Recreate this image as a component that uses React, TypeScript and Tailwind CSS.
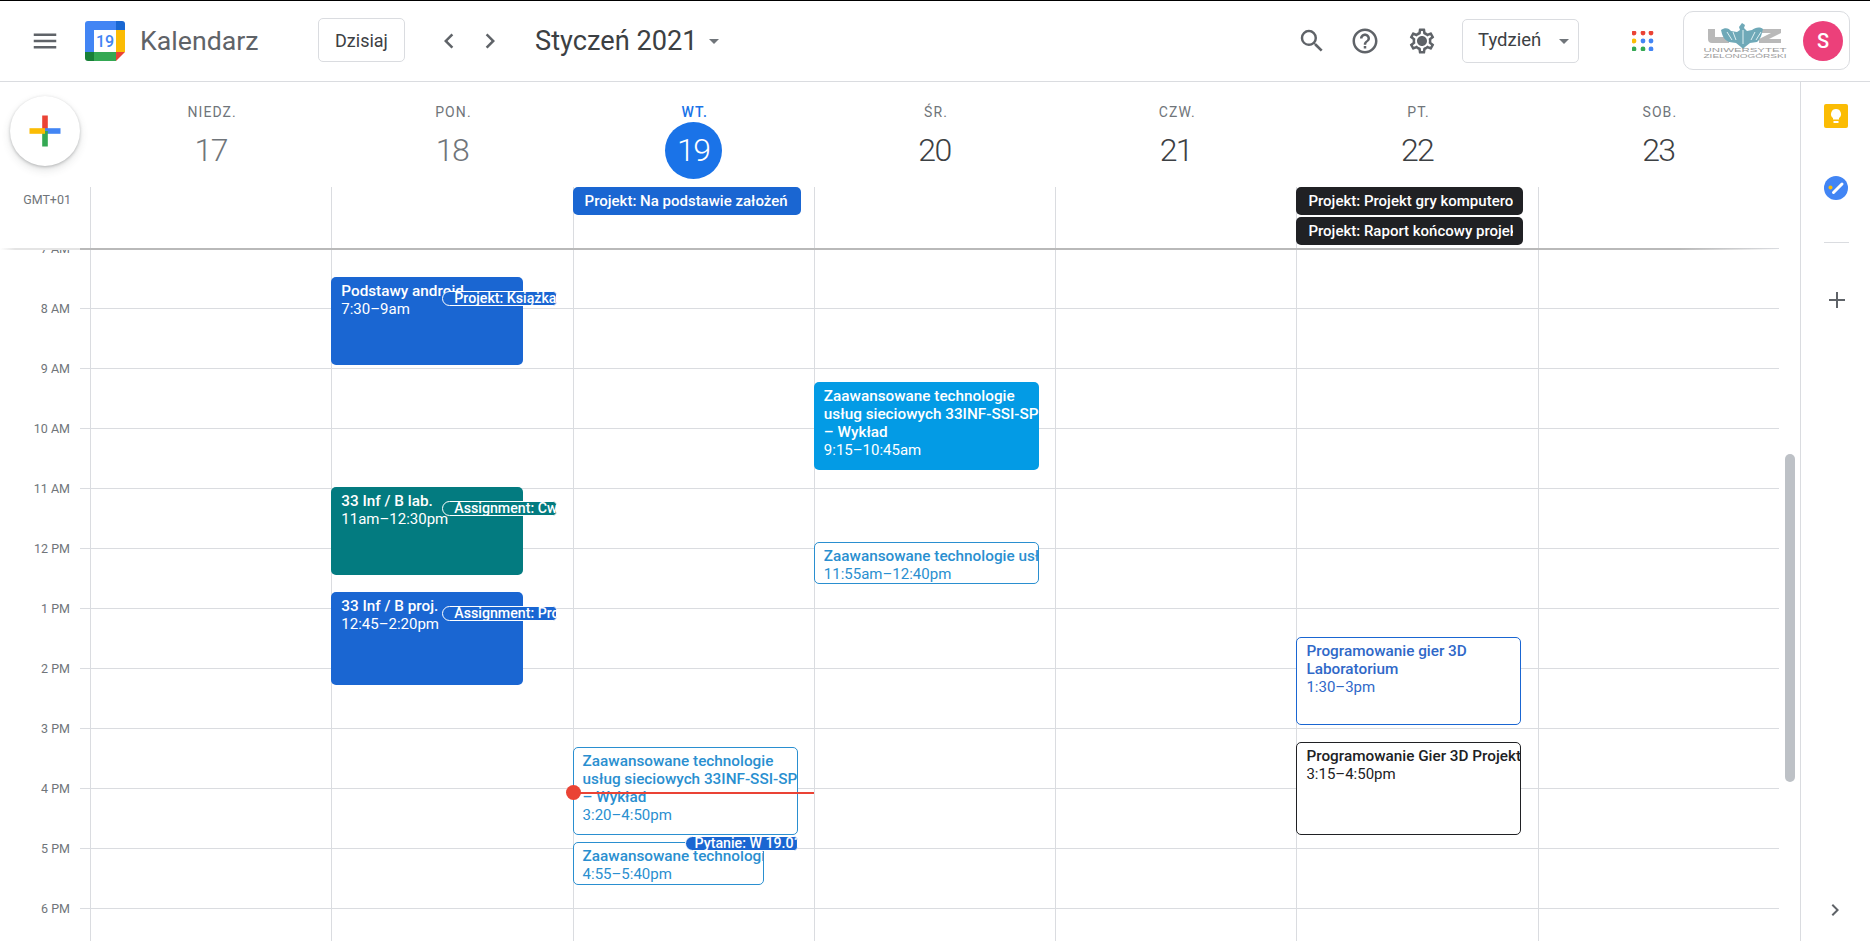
import React from "react";

const Ic = ({ d, className = "" }: { d: string; className?: string }) => (
  <svg viewBox="0 0 24 24" className={"w-[30px] h-[30px] shrink-0 fill-[#5f6368] " + className}>
    <path d={d} />
  </svg>
);

const Caret = ({ className = "" }: { className?: string }) => (
  <svg viewBox="0 0 10 5" className={"w-[10px] h-[5px] shrink-0 fill-[#70757a] " + className}>
    <path d="M0 0h10L5 5z" />
  </svg>
);

const Logo = () => (
  <svg viewBox="0 0 40 40" className="w-[40px] h-[40px] shrink-0 ml-[25px]">
    <path d="M3 0h6v9H0V3a3 3 0 0 1 3-3z" fill="#4285f4" />
    <rect x="9" y="0" width="22" height="9" fill="#4285f4" />
    <path d="M31 0h6a3 3 0 0 1 3 3v6h-9z" fill="#1967d2" />
    <rect x="0" y="9" width="9" height="22" fill="#4285f4" />
    <rect x="31" y="9" width="9" height="22" fill="#fbbc04" />
    <rect x="9" y="31" width="22" height="9" fill="#34a853" />
    <path d="M0 31h9v9H3a3 3 0 0 1-3-3z" fill="#188038" />
    <path d="M31 31h9l-9 9z" fill="#ea4335" />
    <rect x="9" y="9" width="22" height="22" fill="#fff" />
    <text x="20" y="26" textAnchor="middle" fontSize="16" fontWeight="500" fill="#4285f4" fontFamily="Roboto, sans-serif">19</text>
  </svg>
);

const UzLogo = () => (
  <svg viewBox="0 0 84 36" className="w-[84px] h-[36px] shrink-0 ml-[19px]">
    <path d="M5 6h7v8h14v6H9a4 4 0 0 1-4-4z" fill="#b9b9b9" />
    <path d="M56 6h22v4l-12 6h12v4H56v-4l12-6H56z" fill="#b9b9b9" />
    <path d="M18 7c4-3 8-2 10 1l6 1 3-2-1-3 3-4 3 2-1 3 3 3 5-1c3-2 7-4 11-1-1 4-2 10-6 13l-7 1-5 4-2 2-2-2-5-4-7-1C21 17 19 12 18 7z" fill="#6fa9b8" />
    <path d="M24 9l5 8M30 9l3 8M52 9l-4 8M58 9l-5 8M40 7v14" stroke="#dff0f3" strokeWidth="1" fill="none" />
    <text x="42" y="29" textAnchor="middle" fontSize="5.5" fill="#9a9a9a" textLength="83" lengthAdjust="spacingAndGlyphs" fontFamily="Liberation Sans, sans-serif">UNIWERSYTET</text>
    <text x="42" y="35" textAnchor="middle" fontSize="5.5" fill="#9a9a9a" textLength="83" lengthAdjust="spacingAndGlyphs" fontFamily="Liberation Sans, sans-serif">ZIELONOGÓRSKI</text>
  </svg>
);

const Apps = () => (
  <svg viewBox="0 0 22 20" className="w-[22px] h-[20px] ml-[53px] shrink-0 mr-[4px]">
    {[
      [2, 2, "#ea4335"], [11, 2, "#ea4335"], [19, 2, "#ea4335"],
      [2, 10, "#fbbc04"], [11, 10, "#4285f4"], [19, 10, "#4285f4"],
      [2, 18, "#34a853"], [11, 18, "#34a853"], [19, 18, "#4285f4"],
    ].map(([x, y, c], i) => (
      <circle key={i} cx={x as number} cy={y as number} r="2.4" fill={c as string} />
    ))}
  </svg>
);

const Header = () => (
  <header className="flex items-center h-[82px] shrink-0 border-t border-t-black border-b border-b-[#dadce0] text-[#3c4043]">
    <Ic className="ml-[30px]" d="M3 18h18v-2H3v2zm0-5h18v-2H3v2zm0-7v2h18V6H3z" />
    <Logo />
    <div className="ml-[15px] w-[178px] text-[26.7px] leading-[36px] text-[#5f6368]">Kalendarz</div>
    <button className="w-[87px] h-[44px] rounded-[5px] border border-[#dadce0] text-[18px] -mt-[2px]">Dzisiaj</button>
    <Ic className="ml-[29px]" d="M15.41 7.41 14 6l-6 6 6 6 1.41-1.41L10.83 12z" />
    <Ic className="ml-[11px]" d="M10 6 8.59 7.41 13.17 12l-4.58 4.59L10 18l6-6z" />
    <div className="ml-[30px] text-[27.2px] leading-[36px]">Styczeń 2021</div>
    <Caret className="ml-[11px]" />
    <div className="flex-1" />
    <Ic d="M15.5 14h-.79l-.28-.27A6.471 6.471 0 0 0 16 9.5 6.5 6.5 0 1 0 9.5 16c1.61 0 3.09-.59 4.23-1.57l.27.28v.79l5 4.99L20.49 19l-4.99-5zm-6 0C7.01 14 5 11.99 5 9.5S7.01 5 9.5 5 14 7.01 14 9.5 11.99 14 9.5 14z" />
    <Ic className="ml-[23px]" d="M11 18h2v-2h-2v2zm1-16C6.48 2 2 6.48 2 12s4.48 10 10 10 10-4.48 10-10S17.52 2 12 2zm0 18c-4.41 0-8-3.59-8-8s3.59-8 8-8 8 3.59 8 8-3.59 8-8 8zm0-14c-2.21 0-4 1.79-4 4h2c0-1.1.9-2 2-2s2 .9 2 2c0 2-3 1.75-3 5h2c0-2.25 3-2.5 3-5 0-2.21-1.79-4-4-4z" />
    <svg viewBox="0 0 24 24" className="w-[30px] h-[30px] shrink-0 ml-[27px] fill-[#5f6368]">
      <path d="M19.43 12.98c.04-.32.07-.64.07-.98 0-.34-.03-.66-.07-.98l2.11-1.65c.19-.15.24-.42.12-.64l-2-3.46c-.09-.16-.26-.25-.44-.25-.06 0-.12.01-.17.03l-2.49 1c-.52-.4-1.08-.73-1.69-.98l-.38-2.65C14.46 2.18 14.25 2 14 2h-4c-.25 0-.46.18-.49.42l-.38 2.65c-.61.25-1.17.59-1.69.98l-2.49-1c-.06-.02-.12-.03-.18-.03-.17 0-.34.09-.43.25l-2 3.46c-.13.22-.07.49.12.64l2.11 1.65c-.04.32-.07.65-.07.98 0 .33.03.66.07.98l-2.11 1.65c-.19.15-.24.42-.12.64l2 3.46c.09.16.26.25.44.25.06 0 .12-.01.17-.03l2.49-1c.52.4 1.08.73 1.69.98l.38 2.65c.03.24.24.42.49.42h4c.25 0 .46-.18.49-.42l.38-2.65c.61-.25 1.17-.59 1.69-.98l2.49 1c.06.02.12.03.18.03.17 0 .34-.09.43-.25l2-3.46c.12-.22.07-.49-.12-.64l-2.11-1.65zm-1.98-1.71c.04.31.05.52.05.73 0 .21-.02.43-.05.73l-.14 1.13.89.7 1.08.84-.7 1.21-1.27-.51-1.04-.42-.9.68c-.43.32-.84.56-1.25.73l-1.06.43-.16 1.13-.2 1.35h-1.4l-.19-1.35-.16-1.13-1.06-.43c-.43-.18-.83-.41-1.23-.71l-.91-.7-1.06.43-1.27.51-.7-1.21 1.08-.84.89-.7-.14-1.13c-.03-.31-.05-.54-.05-.74s.02-.43.05-.73l.14-1.13-.89-.7-1.08-.84.7-1.21 1.27.51 1.04.42.9-.68c.43-.32.84-.56 1.25-.73l1.06-.43.16-1.13.2-1.35h1.39l.19 1.35.16 1.13 1.06.43c.43.18.83.41 1.23.71l.91.7 1.06-.43 1.27-.51.7 1.21-1.07.85-.89.7.14 1.13zM12 8c-2.21 0-4 1.79-4 4s1.79 4 4 4 4-1.79 4-4-1.79-4-4-4z" />
      <circle cx="12" cy="12" r="3" />
    </svg>
    <button className="ml-[25px] w-[117px] h-[44px] rounded-[5px] border border-[#dadce0] flex items-center pl-[15px] text-[18.5px]">
      Tydzień
      <Caret className="ml-[18px]" />
    </button>
    <Apps />
    <div className="ml-[25px] mr-[20px] w-[167px] h-[59px] rounded-[10px] border border-[#dadce0] flex items-center -mt-[1px]">
      <UzLogo />
      <div className="ml-[16px] w-[40px] h-[40px] rounded-full bg-[#ec407a] text-white text-[20px] font-medium flex items-center justify-center">S</div>
    </div>
  </header>
);

const days = [
  { n: "NIEDZ.", d: "17", past: true },
  { n: "PON.", d: "18", past: true },
  { n: "WT.", d: "19", today: true },
  { n: "ŚR.", d: "20" },
  { n: "CZW.", d: "21" },
  { n: "PT.", d: "22" },
  { n: "SOB.", d: "23" },
];

const DayHeader = () => (
  <div className="flex h-[105px] shrink-0 pr-[21px]">
    <div className="w-[90px] shrink-0 pl-[10px] pt-[14px]">
      <div className="relative z-20 w-[70px] h-[70px] rounded-full bg-white shadow-[0_1px_3px_rgba(60,64,67,0.3),0_4px_8px_rgba(60,64,67,0.15)] flex items-center justify-center">
        <svg viewBox="0 0 36 36" className="w-[36px] h-[36px]">
          <rect x="15.2" y="2.5" width="5.6" height="15.5" fill="#ea4335" />
          <rect x="18" y="15.2" width="15.5" height="5.6" fill="#4285f4" />
          <rect x="15.2" y="18" width="5.6" height="15.5" fill="#34a853" />
          <rect x="2.5" y="15.2" width="15.5" height="5.6" fill="#fbbc04" />
        </svg>
      </div>
    </div>
    <div className="flex-1 grid grid-cols-7">
      {days.map((x) => (
        <div key={x.n} className="flex flex-col items-center pt-[20px]">
          <div className={"h-[20px] leading-[20px] text-[14px] tracking-[1.1px] pl-[3px] " + (x.today ? "text-[#1a73e8] font-medium" : "text-[#70757a]")}>{x.n}</div>
          <div
            className={
              "w-[57px] h-[57px] rounded-full flex items-center justify-center text-[32px] font-light tracking-[-1.6px] pb-[1px] " +
              (x.today ? "bg-[#1a73e8] text-white" : x.past ? "text-[#70757a]" : "text-[#3c4043]")
            }
          >
            {x.d}
          </div>
        </div>
      ))}
    </div>
  </div>
);

const AllDayChip = ({ text, className }: { text: string; className: string }) => (
  <div className={"h-[28px] rounded-[5px] pl-[12px] pr-[10px] text-white text-[15px] font-medium leading-[28px] " + className}>
    <div className="overflow-hidden whitespace-nowrap">{text}</div>
  </div>
);

const AllDay = () => (
  <div className="flex h-[61px] shrink-0 pr-[21px]">
    <div className="w-[90px] shrink-0 text-[12.5px] text-[#70757a] leading-[26px] text-right pr-[19px]">GMT+01</div>
    <div className="flex-1 grid grid-cols-7">
      <div className="border-l border-[#dadce0]" />
      <div className="border-l border-[#dadce0]" />
      <div className="border-l border-[#dadce0]">
        <AllDayChip text="Projekt: Na podstawie założeń" className="bg-[#1a66d2] w-[228px] -ml-[1px]" />
      </div>
      <div className="border-l border-[#dadce0]" />
      <div className="border-l border-[#dadce0]" />
      <div className="border-l border-[#dadce0] flex flex-col gap-[2px]">
        <AllDayChip text="Projekt: Projekt gry komputerowej" className="bg-[#202124] w-[227px] -ml-[1px]" />
        <AllDayChip text="Projekt: Raport końcowy projektu" className="bg-[#202124] w-[227px] -ml-[1px]" />
      </div>
      <div className="border-l border-[#dadce0]" />
    </div>
  </div>
);

const Ev = ({
  title, time, className,
}: { title: React.ReactNode; time: string; className: string }) => (
  <div className={"absolute overflow-hidden rounded-[5px] text-[15px] leading-[18px] whitespace-nowrap " + className}>
    <div className="font-medium text-[15.3px]">{title}</div>
    <div>{time}</div>
  </div>
);

const Chip = ({ text, className }: { text: string; className: string }) => (
  <div className={"absolute z-10 h-[15px] overflow-hidden rounded-l-[8px] rounded-r-[4px] border border-white text-white text-[14.2px] font-medium leading-[13px] whitespace-nowrap " + className}>
    {text}
  </div>
);

const zaaw = (
  <>
    Zaawansowane technologie
    <br />
    usług sieciowych 33INF-SSI-SP
    <br />– Wykład
  </>
);

const hours = ["7 AM", "8 AM", "9 AM", "10 AM", "11 AM", "12 PM", "1 PM", "2 PM", "3 PM", "4 PM", "5 PM", "6 PM", "7 PM"];

const solid = " text-white pl-[10px] pt-[5px]";
const outline = " bg-white border pl-[9px] pt-[4px]";

const Grid = () => (
  <div className="relative flex-1 overflow-hidden pr-[21px]">
    {hours.map((h) => (
      <div key={h} className="flex h-[60px]">
        <div className="w-[70px] shrink-0 text-right text-[12.5px] leading-[16px] text-[#70757a] -translate-y-[7px]">{h}</div>
        <div className="flex-1 ml-[10px] border-t border-[#dadce0]" />
      </div>
    ))}
    <div className="absolute inset-y-0 left-[90px] right-[21px] grid grid-cols-7">
      <div className="border-l border-[#dadce0]" />
      <div className="relative border-l border-[#dadce0]">
        <Ev className={"left-[-1px] top-[29px] w-[192px] h-[88px] bg-[#1a66d2]" + solid} title="Podstawy android" time="7:30–9am" />
        <Chip className="left-[110px] top-[43px] w-[115px] pl-[11px] bg-[#1a66d2]" text="Projekt: Książka" />
        <Ev className={"left-[-1px] top-[239px] w-[192px] h-[88px] bg-[#037b80]" + solid} title="33 Inf / B lab." time="11am–12:30pm" />
        <Chip className="left-[110px] top-[253px] w-[115px] pl-[11px] bg-[#037b80]" text="Assignment: Ćwiczenia" />
        <Ev className={"left-[-1px] top-[344px] w-[192px] h-[93px] bg-[#1a66d2]" + solid} title="33 Inf / B proj." time="12:45–2:20pm" />
        <Chip className="left-[110px] top-[358px] w-[115px] pl-[11px] bg-[#1a66d2]" text="Assignment: Projekt" />
      </div>
      <div className="relative border-l border-[#dadce0]">
        <Ev className={"left-[-1px] top-[499px] w-[225px] h-[88px] border-[#2a8fd0] text-[#2a8fd0]" + outline} title={zaaw} time="3:20–4:50pm" />
        <Ev className={"left-[-1px] top-[594px] w-[191px] h-[43px] border-[#2a8fd0] text-[#2a8fd0]" + outline} title="Zaawansowane technologie usług" time="4:55–5:40pm" />
        <Chip className="left-[111px] top-[588px] w-[113px] pl-[9px] bg-[#1a66d2]" text="Pytanie: W 19.01" />
        <div className="absolute z-20 left-[-1px] right-0 top-[544px] h-[2px] bg-[#ea4335]" />
        <div className="absolute z-20 left-[-8px] top-[537px] w-[15px] h-[15px] rounded-full bg-[#ea4335]" />
      </div>
      <div className="relative border-l border-[#dadce0]">
        <Ev className={"left-[-1px] top-[134px] w-[225px] h-[88px] bg-[#039be5]" + solid} title={zaaw} time="9:15–10:45am" />
        <Ev className={"left-[-1px] top-[294px] w-[225px] h-[42px] border-[#2a8fd0] text-[#2a8fd0]" + outline} title="Zaawansowane technologie usług" time="11:55am–12:40pm" />
      </div>
      <div className="border-l border-[#dadce0]" />
      <div className="relative border-l border-[#dadce0]">
        <Ev
          className={"left-[-1px] top-[389px] w-[225px] h-[88px] border-[#1a66d2] text-[#2f68c8]" + outline}
          title={<>Programowanie gier 3D<br />Laboratorium</>}
          time="1:30–3pm"
        />
        <Ev className={"left-[-1px] top-[494px] w-[225px] h-[93px] border-[#202124] text-[#202124]" + outline} title="Programowanie Gier 3D Projekt" time="3:15–4:50pm" />
      </div>
      <div className="border-l border-[#dadce0]" />
    </div>
    <div className="absolute top-0 left-0 w-[1779px] h-[2px] bg-[linear-gradient(to_right,transparent_0,#e4e4e4_15px,#e4e4e4_80px,#b9b9b9_80px,#b9b9b9_1680px,transparent_1779px)]" />
    <div className="absolute right-[5px] top-[206px] w-[10px] h-[328px] rounded-[5px] bg-[#bdc1c6]" />
  </div>
);

const Side = () => (
  <aside className="w-[70px] shrink-0 border-l border-[#dadce0] flex flex-col items-center pt-[22px]">
    <svg viewBox="0 0 24 24" className="w-[24px] h-[24px] ml-[1px]">
      <rect width="24" height="24" rx="2" fill="#fbbc04" />
      <path d="M12 5a5 5 0 0 0-3 9v1.6h6V14a5 5 0 0 0-3-9z" fill="#fff" />
      <rect x="9.5" y="17" width="5" height="2" fill="#fff" />
    </svg>
    <svg viewBox="0 0 24 24" className="w-[24px] h-[24px] mt-[48px] ml-[1px]">
      <circle cx="12" cy="12" r="12" fill="#4285f4" />
      <path d="M9.5 16.5 18 8" stroke="#fff" strokeWidth="3" strokeLinecap="round" />
      <circle cx="6.5" cy="11.5" r="2" fill="#fbbc04" />
    </svg>
    <div className="w-[25px] h-px bg-[#dadce0] mt-[42px] ml-[1px]" />
    <svg viewBox="0 0 16 16" className="w-[16px] h-[16px] mt-[49px] ml-[2px] fill-[#5f6368]">
      <path d="M7 0h2v7h7v2H9v7H7V9H0V7h7z" />
    </svg>
    <div className="flex-1" />
    <svg viewBox="0 0 24 24" className="w-[24px] h-[24px] mb-[19px] mr-[1px] fill-[#5f6368]">
      <path d="M10 6 8.59 7.41 13.17 12l-4.58 4.59L10 18l6-6z" />
    </svg>
  </aside>
);

export default function App() {
  return (
    <div className="w-full h-screen flex flex-col overflow-hidden bg-white font-[Roboto,sans-serif]">
      <Header />
      <div className="flex flex-1 min-h-0">
        <main className="flex-1 min-w-0 flex flex-col">
          <DayHeader />
          <AllDay />
          <Grid />
        </main>
        <Side />
      </div>
    </div>
  );
}
